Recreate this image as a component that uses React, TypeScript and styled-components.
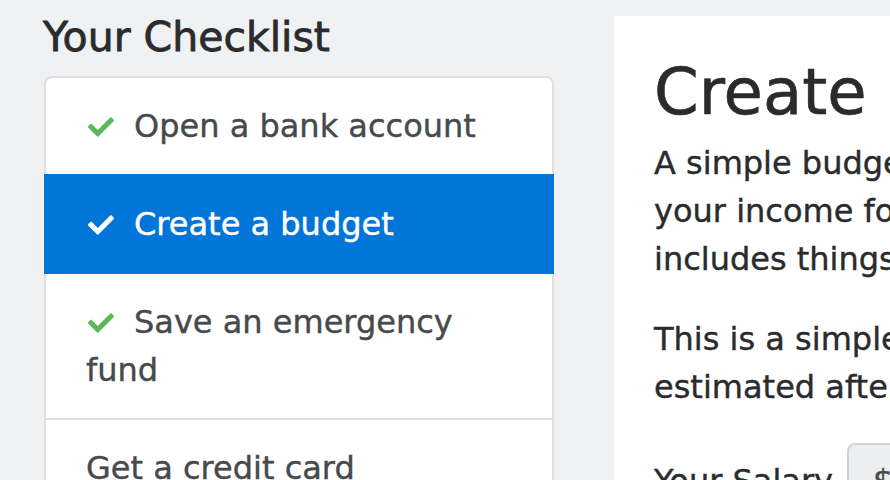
import React from "react";
import styled, { createGlobalStyle } from "styled-components";
import { FaCheck } from "react-icons/fa";

const GlobalStyle = createGlobalStyle`
  html, body {
    margin: 0;
    padding: 0;
    background: #eff1f3;
    overflow: hidden;
  }
  body {
    font-family: "DejaVu Sans", "Liberation Sans", sans-serif;
    font-size: 32px;
    line-height: 1.5;
    color: #292b2c;
    -webkit-text-stroke: 0.4px currentColor;
  }
  * {
    box-sizing: border-box;
  }
`;

const Page = styled.div`
  display: flex;
  align-items: flex-start;
  width: 1500px;
  height: 480px;
  padding-left: 44px;
  gap: 60px;
`;

const Sidebar = styled.aside`
  width: 510px;
  flex: none;
  padding-top: 13px;
`;

const SideTitle = styled.h4`
  margin: 0 0 14px -1px;
  font-size: 41px;
  font-weight: 500;
  line-height: 1.2;
  color: #292b2c;
  -webkit-text-stroke: 0.8px currentColor;
`;

const List = styled.ul`
  list-style: none;
  margin: 0;
  padding: 0;
`;

const Item = styled.li<{ $active?: boolean }>`
  position: relative;
  z-index: ${(p) => (p.$active ? 1 : 0)};
  margin-bottom: -2px;
  padding: 24px 40px;
  color: ${(p) => (p.$active ? "#fff" : "#464a4c")};
  background: ${(p) => (p.$active ? "#0275d8" : "#fff")};
  border: 2px solid ${(p) => (p.$active ? "#0275d8" : "#dfdfdf")};
  &:first-child {
    border-radius: 8px 8px 0 0;
  }
  &:last-child {
    border-radius: 0 0 8px 8px;
  }
`;

const Check = styled(FaCheck)<{ $active?: boolean }>`
  color: ${(p) => (p.$active ? "#fff" : "#5cb85c")};
  width: 26px;
  height: 26px;
  margin: 0 20px 0 2px;
  vertical-align: -3px;
`;

const Panel = styled.main`
  flex: 1;
  margin-top: 16px;
  background: #fff;
  min-height: 470px;
  padding: 38px 40px;
`;

const PanelTitle = styled.h1`
  margin: 0 0 8px;
  font-size: 64px;
  font-weight: 500;
  line-height: 1.2;
  color: #292b2c;
  -webkit-text-stroke: 0.6px currentColor;
`;

const Para = styled.p`
  margin: 0 0 32px;
  white-space: nowrap;
`;

const SalaryRow = styled.div`
  display: flex;
  align-items: center;
  gap: 14px;
  margin-top: 5px;
`;

const Label = styled.label`
  font-weight: 500;
`;

const InputGroup = styled.div`
  display: flex;
`;

const Addon = styled.span`
  padding: 12px 24px;
  background: #eceeef;
  border: 2px solid #cfd1d3;
  border-radius: 8px 0 0 8px;
  color: #464a4c;
`;

const Input = styled.input`
  width: 300px;
  font: inherit;
  padding: 12px 24px;
  border: 2px solid #cfd1d3;
  border-left: none;
  border-radius: 0 8px 8px 0;
  background: #fff;
`;

const items = [
  { text: "Open a bank account", done: true },
  { text: "Create a budget", done: true, active: true },
  { text: "Save an emergency fund", done: true },
  { text: "Get a credit card", done: false },
];

export default function App() {
  return (
    <>
      <GlobalStyle />
      <Page>
        <Sidebar>
          <SideTitle>Your Checklist</SideTitle>
          <List>
            {items.map((it) => (
              <Item key={it.text} $active={it.active}>
                {it.done && <Check $active={it.active} />}
                {it.text}
              </Item>
            ))}
          </List>
        </Sidebar>
        <Panel>
          <PanelTitle>Create a budget</PanelTitle>
          <Para>
            A simple budget is a plan for how to spend
            <br />
            your income for the month. A typical budget
            <br />
            includes things like rent, food and savings.
          </Para>
          <Para>
            This is a simple budget calculator based on your
            <br />
            estimated after-tax monthly salary.
          </Para>
          <SalaryRow>
            <Label htmlFor="salary">Your Salary</Label>
            <InputGroup>
              <Addon>$</Addon>
              <Input id="salary" />
            </InputGroup>
          </SalaryRow>
        </Panel>
      </Page>
    </>
  );
}
